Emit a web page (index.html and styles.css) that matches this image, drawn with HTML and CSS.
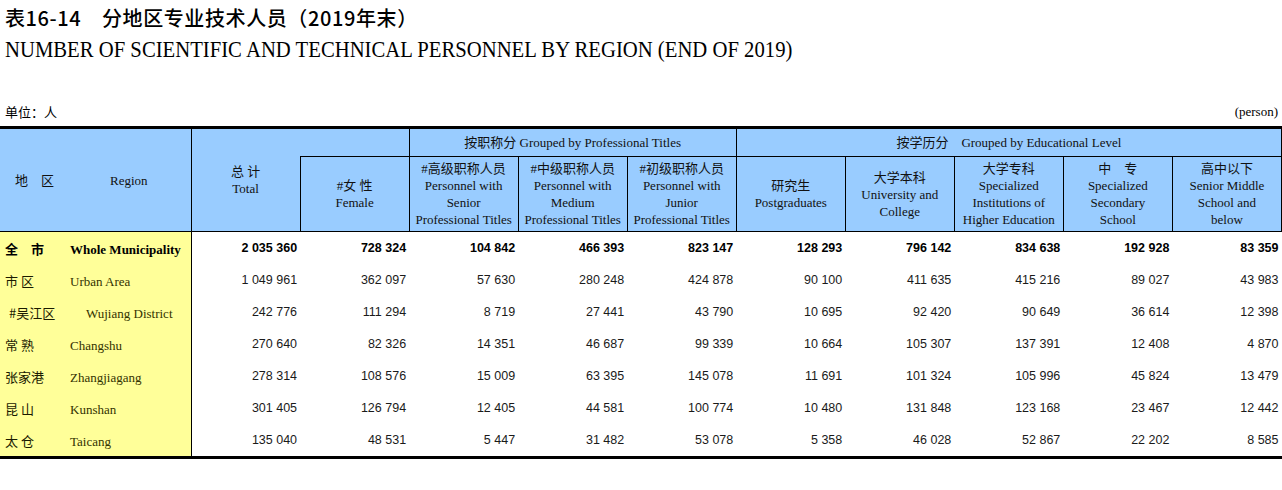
FILE: index.html
```html
<!DOCTYPE html>
<html lang="zh-CN">
<head>
<meta charset="utf-8">
<title>表16-14 分地区专业技术人员（2019年末）</title>
<link rel="stylesheet" href="styles.css">
</head>
<body>
<div class="page">
  <h1 class="title-zh">表16-14　分地区专业技术人员（2019年末）</h1>
  <h2 class="title-en"><span>NUMBER OF SCIENTIFIC AND TECHNICAL PERSONNEL BY REGION (END OF 2019)</span></h2>
  <div class="unit-row"><span class="unit-zh">单位：人</span><span class="unit-en">(person)</span></div>
</div>
<table class="stats">
  <colgroup>
    <col class="c-region">
    <col class="c-num" span="10">
  </colgroup>
  <thead>
    <tr class="hr1">
      <th rowspan="2" class="h-region"><div class="rh"><span class="rh-zh">地　区</span><span class="rh-en">Region</span></div></th>
      <th rowspan="2" class="h-total">总 计<br>Total</th>
      <th class="h-blank"></th>
      <th colspan="3" class="h-group">按职称分 Grouped by Professional Titles</th>
      <th colspan="5" class="h-group h-last">按学历分　Grouped by Educational Level</th>
    </tr>
    <tr class="hr2">
      <th>#女 性<br>Female</th>
      <th>#高级职称人员<br>Personnel with<br>Senior<br>Professional Titles</th>
      <th>#中级职称人员<br>Personnel with<br>Medium<br>Professional Titles</th>
      <th>#初级职称人员<br>Personnel with<br>Junior<br>Professional Titles</th>
      <th>研究生<br>Postgraduates</th>
      <th>大学本科<br>University and<br>College</th>
      <th>大学专科<br>Specialized<br>Institutions of<br>Higher Education</th>
      <th>中　专<br>Specialized<br>Secondary<br>School</th>
      <th class="h-last">高中以下<br>Senior Middle<br>School and<br>below</th>
    </tr>
  </thead>
  <tbody>
    <tr class="total-row">
      <td class="region"><span class="zh">全　市</span><span class="en">Whole Municipality</span></td>
      <td>2 035 360</td><td>728 324</td><td>104 842</td><td>466 393</td><td>823 147</td><td>128 293</td><td>796 142</td><td>834 638</td><td>192 928</td><td>83 359</td>
    </tr>
    <tr>
      <td class="region"><span class="zh">市 区</span><span class="en">Urban Area</span></td>
      <td>1 049 961</td><td>362 097</td><td>57 630</td><td>280 248</td><td>424 878</td><td>90 100</td><td>411 635</td><td>415 216</td><td>89 027</td><td>43 983</td>
    </tr>
    <tr>
      <td class="region sub"><span class="zh">#吴江区</span><span class="en">Wujiang District</span></td>
      <td>242 776</td><td>111 294</td><td>8 719</td><td>27 441</td><td>43 790</td><td>10 695</td><td>92 420</td><td>90 649</td><td>36 614</td><td>12 398</td>
    </tr>
    <tr>
      <td class="region"><span class="zh">常 熟</span><span class="en">Changshu</span></td>
      <td>270 640</td><td>82 326</td><td>14 351</td><td>46 687</td><td>99 339</td><td>10 664</td><td>105 307</td><td>137 391</td><td>12 408</td><td>4 870</td>
    </tr>
    <tr>
      <td class="region"><span class="zh">张家港</span><span class="en">Zhangjiagang</span></td>
      <td>278 314</td><td>108 576</td><td>15 009</td><td>63 395</td><td>145 078</td><td>11 691</td><td>101 324</td><td>105 996</td><td>45 824</td><td>13 479</td>
    </tr>
    <tr>
      <td class="region"><span class="zh">昆 山</span><span class="en">Kunshan</span></td>
      <td>301 405</td><td>126 794</td><td>12 405</td><td>44 581</td><td>100 774</td><td>10 480</td><td>131 848</td><td>123 168</td><td>23 467</td><td>12 442</td>
    </tr>
    <tr class="last-row">
      <td class="region"><span class="zh">太 仓</span><span class="en">Taicang</span></td>
      <td>135 040</td><td>48 531</td><td>5 447</td><td>31 482</td><td>53 078</td><td>5 358</td><td>46 028</td><td>52 867</td><td>22 202</td><td>8 585</td>
    </tr>
  </tbody>
</table>
</body>
</html>
```
FILE: styles.css
```css
html, body {
  margin: 0;
  padding: 0;
  background: #ffffff;
  color: #000;
}

.page {
  padding: 6px 4px 0 5px;
}

.title-zh {
  margin: 0;
  font-family: "Noto Sans CJK SC", "Noto Sans", sans-serif;
  font-size: 20px;
  font-weight: 500;
  letter-spacing: 0.6px;
  line-height: 24px;
  color: #000;
}

.title-en {
  margin: 7px 0 0 0;
  font-family: "Liberation Serif", serif;
  font-size: 22.5px;
  font-weight: normal;
  line-height: 26px;
  white-space: nowrap;
}

.title-en span {
  display: inline-block;
  transform: scaleX(0.92);
  transform-origin: left center;
}

.unit-row {
  margin-top: 41px;
  display: flex;
  justify-content: space-between;
  align-items: center;
  height: 16px;
}

.unit-zh {
  font-family: "Noto Sans CJK SC", sans-serif;
  font-size: 13px;
  line-height: 16px;
}

.unit-en {
  font-family: "Liberation Serif", serif;
  font-size: 13px;
  line-height: 16px;
}

.stats {
  margin-top: 6px;
  width: 1282px;
  table-layout: fixed;
  border-collapse: collapse;
  font-family: "Liberation Serif", "Noto Sans CJK SC", serif;
  font-size: 13px;
}

.c-region { width: 191px; }
.c-num { width: 109px; }

.stats th {
  background: #99ccff;
  font-weight: normal;
  line-height: 17px;
  padding: 0;
  text-align: center;
  vertical-align: middle;
  color: #111;
}

.hr1 th {
  border-top: 3px solid #000;
  height: 27px;
}

.hr1 .h-blank,
.hr1 .h-group {
  border-bottom: 1px solid #000;
}

.hr1 .h-group {
  border-left: 1px solid #000;
}

.h-last {
  border-right: 1px solid #000;
}

.h-region,
.h-total {
  border-bottom: 1px solid #000;
}

.h-region {
  border-right: 1px solid #000;
}

.rh {
  display: flex;
  align-items: center;
  padding-left: 15px;
}

.rh-zh {
  width: 95px;
  text-align: left;
}

.hr2 th {
  height: 74px;
  border-left: 1px solid #000;
  border-bottom: 1px solid #000;
}

.stats td {
  height: 32px;
  padding: 0 3px 0 0;
  text-align: right;
  vertical-align: middle;
  font-family: "Liberation Sans", sans-serif;
  font-size: 12.5px;
  color: #1a1a1a;
  white-space: nowrap;
}

.stats td.region {
  background: #ffff99;
  border-right: 1px solid #000;
  text-align: left;
  padding: 0 0 0 5px;
  font-family: "Liberation Serif", "Noto Sans CJK SC", serif;
  font-size: 13px;
  color: #333300;
}

.region .zh {
  display: inline-block;
  box-sizing: border-box;
  width: 65px;
  font-family: "Noto Sans CJK SC", sans-serif;
  color: #1a1a00;
}

.region.sub .zh {
  width: 81px;
  padding-left: 4px;
}

.total-row td {
  font-weight: bold;
  color: #000;
}

.total-row td.region,
.total-row .region .zh {
  color: #000;
}

.last-row td {
  border-bottom: 3px solid #000;
}
```
